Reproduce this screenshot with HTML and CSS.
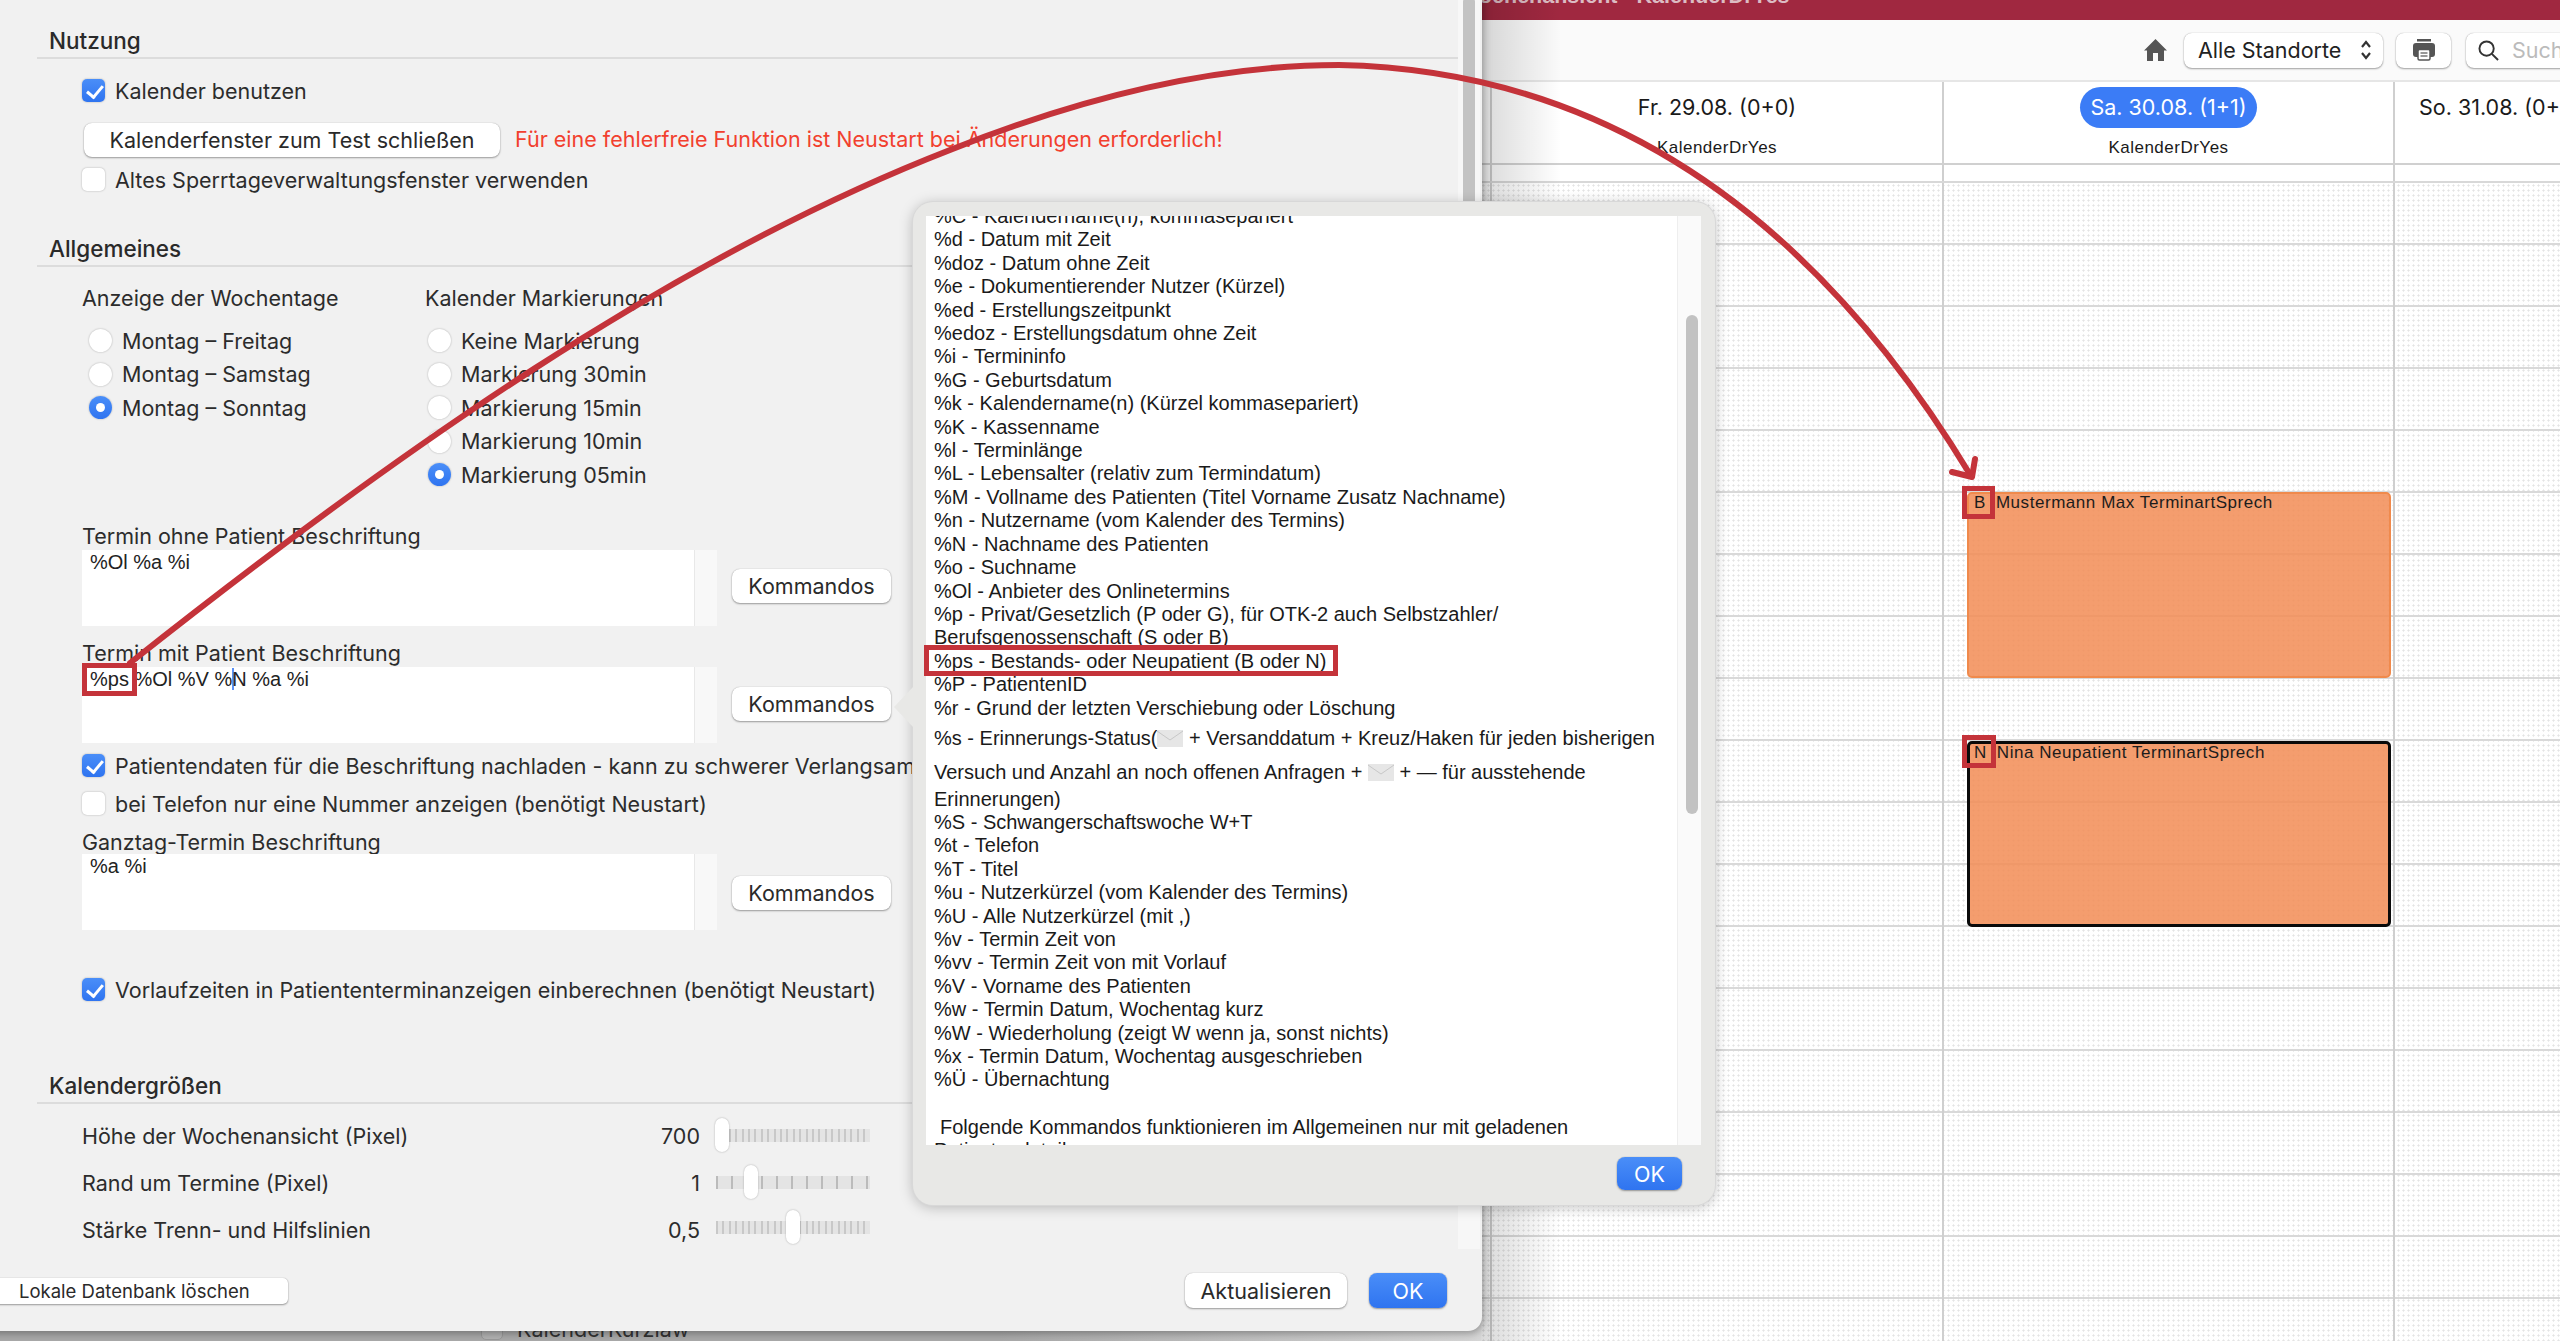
FILE: index.html
```html
<!doctype html>
<html>

<head>
    <meta charset="utf-8">
    <title>Kalender Einstellungen</title>
    <link rel="stylesheet" href="styles.css">
</head>

<body>
    <!-- calendar window in the back -->
    <div class="calendar">
        <div class="cal-title"><span>Wochenansicht - KalenderDrYes</span></div>
        <div class="cal-toolbar">
            <svg class="home-icon" viewBox="0 0 23 22" aria-hidden="true">
                <path d="M11.500 0 L23 11.500 H20 V22 H14 V14 H9 V22 H3 V11.500 H0 Z" />
            </svg>
            <div class="tool-btn select-btn">
                <span>Alle Standorte</span>
                <svg class="updown" viewBox="0 0 12 20" aria-hidden="true">
                    <path d="M2 7 L6 2 L10 7 M2 13 L6 18 L10 13" />
                </svg>
            </div>
            <div class="tool-btn print-btn">
                <svg viewBox="0 0 22 22" aria-hidden="true">
                    <rect class="print-top" x="4" y="0" width="14" height="2.500" />
                    <rect class="print-body" x="0" y="4" width="22" height="14" rx="3" />
                    <rect class="print-paper" x="5" y="10.500" width="12" height="10.500" rx="1.500" />
                    <path class="print-lines" d="M7.500 14 H14.500 M7.500 17 H14.500" />
                </svg>
            </div>
            <div class="tool-btn search-btn">
                <svg viewBox="0 0 22 22" aria-hidden="true">
                    <circle cx="9" cy="9" r="7.500" />
                    <path d="M14.500 14.500 L21 21" />
                </svg>
                <span>Suchen</span>
            </div>
        </div>
        <div class="cal-head">
            <div class="day-col first-col"></div>
            <div class="day-col fri-col">
                <div class="day-name"><span>Fr. 29.08. (0+0)</span></div>
                <div class="day-cal">KalenderDrYes</div>
            </div>
            <div class="day-col sat-col">
                <div class="day-name"><span class="today">Sa. 30.08. (1+1)</span></div>
                <div class="day-cal">KalenderDrYes</div>
            </div>
            <div class="day-col sun-col">
                <div class="day-name sun-name"><span>So. 31.08. (0+0)</span></div>
            </div>
        </div>
        <div class="allday-row">
            <div class="first-col"></div>
            <div class="fri-col"></div>
            <div class="sat-col"></div>
            <div class="sun-col"></div>
        </div>
        <div class="cal-grid">
            <div class="first-col"></div>
            <div class="fri-col"></div>
            <div class="sat-col appt-col">
                <div class="appt appt-known">
                    <span class="appt-code">B</span><span>Mustermann Max TerminartSprech</span>
                </div>
                <div class="appt appt-new">
                    <span class="appt-code">N</span><span>Nina Neupatient TerminartSprech</span>
                </div>
            </div>
            <div class="sun-col"></div>
        </div>
    </div>

    <!-- list behind the settings window, only its lower edge peeks out -->
    <div class="peek"><span class="peek-check"></span><span>KalenderKurzlaw</span></div>

    <!-- settings window -->
    <div class="settings">
        <div class="section-head">Nutzung</div>
        <div class="section-body">
            <label class="check-row row-use"><span class="check on"></span>Kalender benutzen</label>
            <div class="button-row">
                <span class="mac-btn close-btn">Kalenderfenster zum Test schließen</span>
                <span class="warn">Für eine fehlerfreie Funktion ist Neustart bei Änderungen erforderlich!</span>
            </div>
            <label class="check-row"><span class="check"></span>Altes Sperrtageverwaltungsfenster verwenden</label>
        </div>

        <div class="section-head head-general">Allgemeines</div>
        <div class="section-body">
            <div class="radio-groups">
                <div class="radio-group">
                    <div class="group-title">Anzeige der Wochentage</div>
                    <label class="radio-row"><span class="radio"></span>Montag – Freitag</label>
                    <label class="radio-row"><span class="radio"></span>Montag – Samstag</label>
                    <label class="radio-row"><span class="radio on"></span>Montag – Sonntag</label>
                </div>
                <div class="radio-group group-marks">
                    <div class="group-title">Kalender Markierungen</div>
                    <label class="radio-row"><span class="radio"></span>Keine Markierung</label>
                    <label class="radio-row"><span class="radio"></span>Markierung 30min</label>
                    <label class="radio-row"><span class="radio"></span>Markierung 15min</label>
                    <label class="radio-row"><span class="radio"></span>Markierung 10min</label>
                    <label class="radio-row"><span class="radio on"></span>Markierung 05min</label>
                </div>
            </div>

            <div class="field-title title-first">Termin ohne Patient Beschriftung</div>
            <div class="field-row">
                <div class="field-box">%Ol %a %i</div>
                <span class="mac-btn cmd-btn">Kommandos</span>
            </div>

            <div class="field-title">Termin mit Patient Beschriftung</div>
            <div class="field-row">
                <div class="field-box">%ps %Ol %V %<span class="caret"></span>N %a %i</div>
                <span class="mac-btn cmd-btn cmd-second">Kommandos</span>
            </div>

            <label class="check-row row-reload"><span class="check on"></span><span class="clip-text">Patientendaten für die Beschriftung nachladen - kann zu schwerer Verlangsamung führen</span></label>
            <label class="check-row row-phone"><span class="check"></span>bei Telefon nur eine Nummer anzeigen (benötigt Neustart)</label>

            <div class="field-title">Ganztag-Termin Beschriftung</div>
            <div class="field-row row-tight">
                <div class="field-box">%a %i</div>
                <span class="mac-btn cmd-btn cmd-third">Kommandos</span>
            </div>

            <label class="check-row row-lead"><span class="check on"></span>Vorlaufzeiten in Patiententerminanzeigen einberechnen (benötigt Neustart)</label>
        </div>

        <div class="section-head head-sizes">Kalendergrößen</div>
        <div class="section-body">
            <div class="slider-row">
                <span class="slider-label">Höhe der Wochenansicht (Pixel)</span>
                <span class="slider-value">700</span>
                <div class="slider ticks-dense"><span class="thumb thumb-a"></span></div>
            </div>
            <div class="slider-row">
                <span class="slider-label">Rand um Termine (Pixel)</span>
                <span class="slider-value">1</span>
                <div class="slider ticks-wide"><span class="thumb thumb-b"></span></div>
            </div>
            <div class="slider-row">
                <span class="slider-label">Stärke Trenn- und Hilfslinien</span>
                <span class="slider-value">0,5</span>
                <div class="slider ticks-dense"><span class="thumb thumb-c"></span></div>
            </div>
        </div>

        <div class="settings-foot">
            <span class="mac-btn wipe-btn">Lokale Datenbank löschen</span>
            <span class="foot-right">
                <span class="mac-btn refresh-btn">Aktualisieren</span>
                <span class="mac-btn blue-btn foot-ok">OK</span>
            </span>
        </div>
        <div class="settings-scroll"><span></span></div>
    </div>

    <!-- command list popover -->
    <div class="popover">
        <div class="pop-tail"></div>
        <div class="pop-list">
            <div class="pop-text">
                <div>%C - Kalendername(n), kommasepariert</div>
                <div>%d - Datum mit Zeit</div>
                <div>%doz - Datum ohne Zeit</div>
                <div>%e - Dokumentierender Nutzer (Kürzel)</div>
                <div>%ed - Erstellungszeitpunkt</div>
                <div>%edoz - Erstellungsdatum ohne Zeit</div>
                <div>%i - Termininfo</div>
                <div>%G - Geburtsdatum</div>
                <div>%k - Kalendername(n) (Kürzel kommasepariert)</div>
                <div>%K - Kassenname</div>
                <div>%l - Terminlänge</div>
                <div>%L - Lebensalter (relativ zum Termindatum)</div>
                <div>%M - Vollname des Patienten (Titel Vorname Zusatz Nachname)</div>
                <div>%n - Nutzername (vom Kalender des Termins)</div>
                <div>%N - Nachname des Patienten</div>
                <div>%o - Suchname</div>
                <div>%Ol - Anbieter des Onlinetermins</div>
                <div>%p - Privat/Gesetzlich (P oder G), für OTK-2 auch Selbstzahler/</div>
                <div>Berufsgenossenschaft (S oder B)</div>
                <div>%ps - Bestands- oder Neupatient (B oder N)</div>
                <div>%P - PatientenID</div>
                <div>%r - Grund der letzten Verschiebung oder Löschung</div>
                <div class="mail-first">%s - Erinnerungs-Status(<svg class="mail" viewBox="0 0 26 17" aria-hidden="true"><rect width="26" height="17" /><path d="M0 1 L13 10 L26 1" /></svg> + Versanddatum + Kreuz/Haken für jeden bisherigen</div>
                <div class="mail-second">Versuch und Anzahl an noch offenen Anfragen + <svg class="mail" viewBox="0 0 26 17" aria-hidden="true"><rect width="26" height="17" /><path d="M0 1 L13 10 L26 1" /></svg> + — für ausstehende</div>
                <div class="mail-third">Erinnerungen)</div>
                <div>%S - Schwangerschaftswoche W+T</div>
                <div>%t - Telefon</div>
                <div>%T - Titel</div>
                <div>%u - Nutzerkürzel (vom Kalender des Termins)</div>
                <div>%U - Alle Nutzerkürzel (mit ,)</div>
                <div>%v - Termin Zeit von</div>
                <div>%vv - Termin Zeit von mit Vorlauf</div>
                <div>%V - Vorname des Patienten</div>
                <div>%w - Termin Datum, Wochentag kurz</div>
                <div>%W - Wiederholung (zeigt W wenn ja, sonst nichts)</div>
                <div>%x - Termin Datum, Wochentag ausgeschrieben</div>
                <div>%Ü - Übernachtung</div>
                <div class="note-line">Folgende Kommandos funktionieren im Allgemeinen nur mit geladenen</div>
                <div>Patientendetails</div>
            </div>
            <div class="pop-scroll"><span></span></div>
        </div>
        <div class="pop-foot"><span class="mac-btn blue-btn pop-ok">OK</span></div>
    </div>

    <!-- red annotations on top of the screenshot -->
    <div class="mark mark-ps-field"></div>
    <div class="mark mark-ps-list"></div>
    <div class="mark mark-b"></div>
    <div class="mark mark-n"></div>
    <svg class="arrow" viewBox="0 0 2560 1341" aria-hidden="true">
        <path d="M130 663 C 395 453, 670 259, 950 150 C 1080 98, 1210 65, 1339 65 C 1600 70, 1810 210, 1971 476" />
        <path d="M1952 472 L1972 477 L1975 459" />
    </svg>
</body>

</html>
```

FILE: styles.css
```css
* {
    box-sizing: border-box;
}

html,
body {
    margin: 0;
    height: 100%;
}

body {
    position: relative;
    width: 2560px;
    height: 1341px;
    overflow: hidden;
    font-family: Inter, "Liberation Sans", Arial, sans-serif;
    font-size: 21.500px;
    color: #2c2c2c;
    background: linear-gradient(to right, #a9a9a9 1000px, #d6d6d6 1480px);
}

/* calendar window */
.calendar {
    position: absolute;
    z-index: 0;
    left: 1481px;
    top: 0;
    width: 1079px;
    height: 1341px;
    background: #fff;
    display: flex;
    flex-direction: column;
}

.calendar::before {
    content: "";
    position: absolute;
    left: 0;
    top: 0;
    width: 80px;
    height: 100%;
    background: linear-gradient(to right, rgba(0, 0, 0, 0.15), rgba(0, 0, 0, 0));
    pointer-events: none;
    z-index: 3;
}

.cal-title {
    height: 20px;
    background: #a02840;
    color: #dcbcc3;
    font-size: 21.500px;
    font-family: "Liberation Sans", Arial, sans-serif;
    font-weight: bold;
    overflow: hidden;
    line-height: 0;
    white-space: nowrap;
    flex-shrink: 0;
}

.cal-title span {
    display: block;
    margin: -4px 0 0 -22px;
}

.cal-toolbar {
    height: 62px;
    background: #fafafa;
    border-bottom: 2px solid #e6e6e6;
    display: flex;
    align-items: center;
    padding-left: 663px;
    flex-shrink: 0;
    overflow: hidden;
}

.home-icon {
    width: 23px;
    height: 22px;
    fill: #555;
    margin-right: 17px;
    flex-shrink: 0;
}

.tool-btn {
    height: 35px;
    background: #fff;
    border-radius: 8px;
    box-shadow: 0 1px 2px rgba(0, 0, 0, 0.35), 0 0 1px rgba(0, 0, 0, 0.3);
    display: flex;
    align-items: center;
    flex-shrink: 0;
}

.select-btn {
    width: 199px;
    padding: 0 11px 0 14px;
    justify-content: space-between;
    color: #222;
}

.updown {
    width: 12px;
    height: 20px;
    fill: none;
    stroke: #333;
    stroke-width: 2.200;
}

.print-btn {
    width: 55px;
    margin-left: 13px;
    justify-content: center;
}

.print-btn svg {
    width: 22px;
    height: 22px;
}

.print-top,
.print-body {
    fill: #555;
}

.print-paper {
    fill: #fff;
    stroke: #555;
    stroke-width: 1.500;
}

.print-lines {
    fill: none;
    stroke: #777;
    stroke-width: 1.300;
}

.search-btn {
    width: 140px;
    margin-left: 15px;
    padding-left: 12px;
    gap: 13px;
    color: #bbb;
}

.search-btn svg {
    width: 21px;
    height: 21px;
    fill: none;
    stroke: #333;
    stroke-width: 2;
    flex-shrink: 0;
}

.cal-head,
.allday-row,
.cal-grid {
    display: grid;
    grid-template-columns: 11px 452px 451px 165px;
}

.first-col,
.fri-col,
.sat-col {
    border-right: 2px solid #cfcfcf;
}

.cal-head {
    height: 83px;
    border-bottom: 2px solid #d0d0d0;
    flex-shrink: 0;
}

.day-name {
    height: 48px;
    padding-top: 2px;
    display: flex;
    justify-content: center;
    align-items: center;
    color: #1a1a1a;
}

.sun-name {
    justify-content: flex-start;
    padding-left: 24px;
    white-space: nowrap;
}

.today {
    width: 177px;
    height: 41px;
    border-radius: 21px;
    background: #3b7cf6;
    color: #fff;
    display: flex;
    align-items: center;
    justify-content: center;
    white-space: nowrap;
}

.day-cal {
    text-align: center;
    font-family: "Liberation Sans", Arial, sans-serif;
    font-size: 17px;
    letter-spacing: 0.500px;
    line-height: 18px;
    margin-top: 9px;
    color: #1a1a1a;
}

.allday-row {
    height: 18px;
    border-bottom: 2px solid #d8d8d8;
    flex-shrink: 0;
}

/* 62px hour rows with the little dot raster */
.cal-grid {
    flex: 1;
    background-color: #fff;
    background-image:
        linear-gradient(#d9d9d9 0, #d9d9d9 2px, transparent 2px),
        radial-gradient(circle, #e4e4e4 0.9px, transparent 1.200px);
    background-size: 100% 62px, 5px 5px;
    background-position: 0 60px, 0 0;
}

.appt-col {
    padding: 309px 2px 0 23px;
}

.appt {
    height: 186px;
    border-radius: 5px;
    border: 2px solid #f08a4c;
    background: rgba(242, 140, 85, 0.85);
    color: #1c1c1c;
    font-family: "Liberation Sans", Arial, sans-serif;
    font-size: 17px;
    letter-spacing: 0.550px;
    line-height: 18px;
    padding: 0 5px;
    white-space: nowrap;
}

.appt-new {
    margin-top: 63px;
    border: 3px solid #0a0a0a;
    padding-left: 4px;
}

.appt-code {
    margin-right: 10px;
}

/* window behind the settings */
.peek {
    position: absolute;
    left: 481px;
    top: 1316px;
    display: flex;
    gap: 14px;
    align-items: flex-start;
    color: #333;
    line-height: 26px;
}

.peek-check {
    width: 22px;
    height: 24px;
    border-radius: 5px;
    background: #b3b3b3;
    border: 1px solid #9a9a9a;
}

/* settings window */
.settings {
    position: absolute;
    left: -14px;
    top: -4px;
    width: 1496px;
    height: 1335px;
    background: #f1f1f1;
    border-bottom-right-radius: 14px;
    box-shadow: 1px 2px 8px rgba(0, 0, 0, 0.35);
    padding-left: 51px;
    padding-right: 24px;
}

.settings-scroll {
    position: absolute;
    right: 2px;
    top: 0;
    height: 1253px;
    width: 22px;
    background: #f7f7f7;
}

.settings-scroll span {
    position: absolute;
    left: 5px;
    top: 0;
    width: 12px;
    height: 420px;
    border-radius: 6px;
    background: #c3c3c3;
}

.section-head {
    font-size: 22.500px;
    font-weight: 500;
    line-height: 28px;
    padding: 31px 0 2px 12px;
    border-bottom: 2px solid #dcdcdc;
    color: #2a2a2a;
}

.head-general {
    padding-top: 44px;
}

.head-sizes {
    padding-top: 71px;
}

.section-body {
    padding-left: 45px;
}

.check-row {
    display: flex;
    align-items: center;
    gap: 10px;
    height: 23px;
    white-space: nowrap;
}

.check {
    width: 23px;
    height: 23px;
    border-radius: 5px;
    background: #fff;
    box-shadow: 0 0 2px rgba(0, 0, 0, 0.3);
    flex-shrink: 0;
    position: relative;
}

.check.on {
    background: linear-gradient(#4a8ef8, #2f74f0);
}

.check.on::after {
    content: "";
    position: absolute;
    left: 8px;
    top: 3px;
    width: 7px;
    height: 13px;
    border: solid #fff;
    border-width: 0 3px 3px 0;
    transform: rotate(40deg);
}

.row-use {
    margin-top: 20px;
}

.button-row {
    display: flex;
    align-items: center;
    margin-top: 21px;
    height: 34px;
    white-space: nowrap;
}

.mac-btn {
    display: inline-flex;
    align-items: center;
    justify-content: center;
    background: #fff;
    border-radius: 8px;
    box-shadow: 0 1px 2px rgba(0, 0, 0, 0.35), 0 0 1px rgba(0, 0, 0, 0.3);
    color: #2a2a2a;
    white-space: nowrap;
}

.close-btn {
    width: 416px;
    height: 34px;
    margin-left: 2px;
}

.warn {
    margin-left: 15px;
    margin-top: -3px;
    color: #f2402e;
}

.button-row + .check-row {
    margin-top: 11px;
}

.radio-groups {
    display: flex;
    height: 238px;
    margin-top: 19px;
}

.radio-group {
    width: 343px;
}

.group-title {
    line-height: 24px;
    margin-bottom: 14px;
}

.radio-row {
    display: flex;
    align-items: center;
    gap: 10px;
    height: 33.500px;
    padding-left: 7px;
    white-space: nowrap;
}

.group-marks .radio-row {
    padding-left: 3px;
}

.radio {
    width: 23px;
    height: 23px;
    border-radius: 50%;
    background: #fff;
    box-shadow: 0 0 2px rgba(0, 0, 0, 0.3);
    position: relative;
    flex-shrink: 0;
}

.radio.on {
    background: linear-gradient(#4a8ef8, #2f74f0);
}

.radio.on::after {
    content: "";
    position: absolute;
    left: 7px;
    top: 7px;
    width: 9px;
    height: 9px;
    border-radius: 50%;
    background: #fff;
}

.field-title {
    line-height: 24px;
    margin-top: 15px;
    white-space: nowrap;
}

.title-first {
    margin-top: 0;
}

.field-row {
    display: flex;
    align-items: flex-start;
    margin-top: 2px;
}

.row-tight {
    margin-top: 0;
}

.field-box {
    width: 635px;
    height: 76px;
    background: linear-gradient(to right, #fff 612px, #e8e8e8 612px, #e8e8e8 613px, #f8f8f8 613px);
    font-family: "Liberation Sans", Arial, sans-serif;
    font-size: 20px;
    line-height: 24px;
    padding-left: 8px;
    color: #222;
    white-space: nowrap;
}

.caret {
    display: inline-block;
    width: 2px;
    height: 22px;
    margin-right: -2px;
    background: #5a90f5;
    vertical-align: -4px;
}

.cmd-btn {
    width: 159px;
    height: 34px;
    margin: 19px 0 0 15px;
}

.cmd-second {
    margin-top: 20px;
}

.cmd-third {
    margin-top: 22px;
}

.row-reload {
    margin-top: 11px;
}

/* the popover covers the end of this line */
.clip-text {
    display: block;
    width: 797px;
    overflow: hidden;
}

.row-phone {
    margin-top: 15px;
}

.row-lead {
    margin-top: 48px;
}

.slider-row {
    display: flex;
    align-items: center;
    height: 47px;
}

.slider-row:first-child {
    margin-top: 8px;
}

.slider-row:last-child .slider {
    margin-top: -4px;
}

.slider-label {
    width: 570px;
}

.slider-value {
    width: 48px;
    text-align: right;
}

.slider {
    width: 154px;
    height: 13px;
    margin-left: 16px;
    position: relative;
    background-color: #e4e4e4;
}

.ticks-dense {
    background-image: repeating-linear-gradient(to right, #c8c8c8 0, #c8c8c8 2px, transparent 2px, transparent 6.400px);
}

.ticks-wide {
    background-image: repeating-linear-gradient(to right, #bbb 0, #bbb 2px, transparent 2px, transparent 15px);
}

.thumb {
    position: absolute;
    top: -11px;
    width: 14px;
    height: 34px;
    border-radius: 7px;
    background: #fff;
    box-shadow: 0 0 2px rgba(0, 0, 0, 0.3);
}

.thumb-a {
    left: -1px;
}

.thumb-b {
    left: 28px;
}

.thumb-c {
    left: 70px;
}

.settings-foot {
    position: absolute;
    left: 0;
    right: 0;
    top: 1277px;
    display: flex;
    justify-content: space-between;
    align-items: center;
    padding-right: 35px;
}

.wipe-btn {
    width: 302px;
    height: 26px;
    font-size: 18.500px;
    border-radius: 5px;
    justify-content: flex-start;
    padding-left: 33px;
}

.foot-right {
    display: flex;
    gap: 22px;
}

.refresh-btn {
    width: 162px;
    height: 35px;
}

.blue-btn {
    background: linear-gradient(#4a8ef8, #2f74f0);
    color: #fff;
}

.foot-ok {
    width: 78px;
    height: 35px;
}

/* popover */
.popover {
    position: absolute;
    left: 913px;
    top: 202px;
    width: 802px;
    height: 1003px;
    background: #e8e8e6;
    border-radius: 20px;
    box-shadow: 0 0 0 1px #d8d8d8, 0 2px 14px rgba(0, 0, 0, 0.25);
    padding: 14px 14px 0 13px;
}

.pop-tail {
    position: absolute;
    left: -19px;
    top: 485px;
    width: 0;
    height: 0;
    border-top: 20px solid transparent;
    border-bottom: 20px solid transparent;
    border-right: 19px solid #e8e8e6;
}

.pop-list {
    height: 929px;
    background: #fff;
    display: flex;
    overflow: hidden;
    position: relative;
}

.pop-text {
    width: 751px;
    padding-left: 8px;
    margin-top: -11px;
    font-family: "Liberation Sans", Arial, sans-serif;
    font-size: 20px;
    line-height: 23.400px;
    color: #1a1a1a;
    white-space: nowrap;
    flex-shrink: 0;
}

.mail-first {
    margin-top: 7px;
    line-height: 23px;
}

.mail-second {
    margin-top: 11px;
    line-height: 23px;
}

.mail-third {
    line-height: 30px;
    margin-bottom: -3px;
}

.mail {
    width: 26px;
    height: 17px;
    vertical-align: -2px;
}

.mail rect {
    fill: #e6e6e6;
}

.mail path {
    fill: none;
    stroke: #c8c8c8;
    stroke-width: 1;
}

.note-line {
    margin-top: 24px;
    padding-left: 6px;
}

.pop-scroll {
    flex: 1;
    background: #fafafa;
    border-left: 1px solid #eee;
    position: relative;
}

.pop-scroll span {
    position: absolute;
    left: 8px;
    top: 99px;
    width: 12px;
    height: 499px;
    border-radius: 6px;
    background: #c2c2c2;
}

.pop-foot {
    display: flex;
    justify-content: flex-end;
    padding: 12px 19px 0 0;
}

.pop-ok {
    width: 65px;
    height: 33px;
}

/* annotations */
.mark {
    position: absolute;
    border: 5px solid #c4333a;
}

.mark-ps-field {
    left: 82px;
    top: 663px;
    width: 55px;
    height: 33px;
}

.mark-ps-list {
    left: 924px;
    top: 645px;
    width: 414px;
    height: 31px;
}

.mark-b {
    left: 1962px;
    top: 486px;
    width: 33px;
    height: 33px;
}

.mark-n {
    left: 1962px;
    top: 735px;
    width: 34px;
    height: 33px;
}

.arrow {
    position: absolute;
    left: 0;
    top: 0;
    width: 2560px;
    height: 1341px;
    fill: none;
    stroke: #c4333a;
    stroke-width: 6;
    stroke-linecap: round;
    stroke-linejoin: round;
    pointer-events: none;
}
```
